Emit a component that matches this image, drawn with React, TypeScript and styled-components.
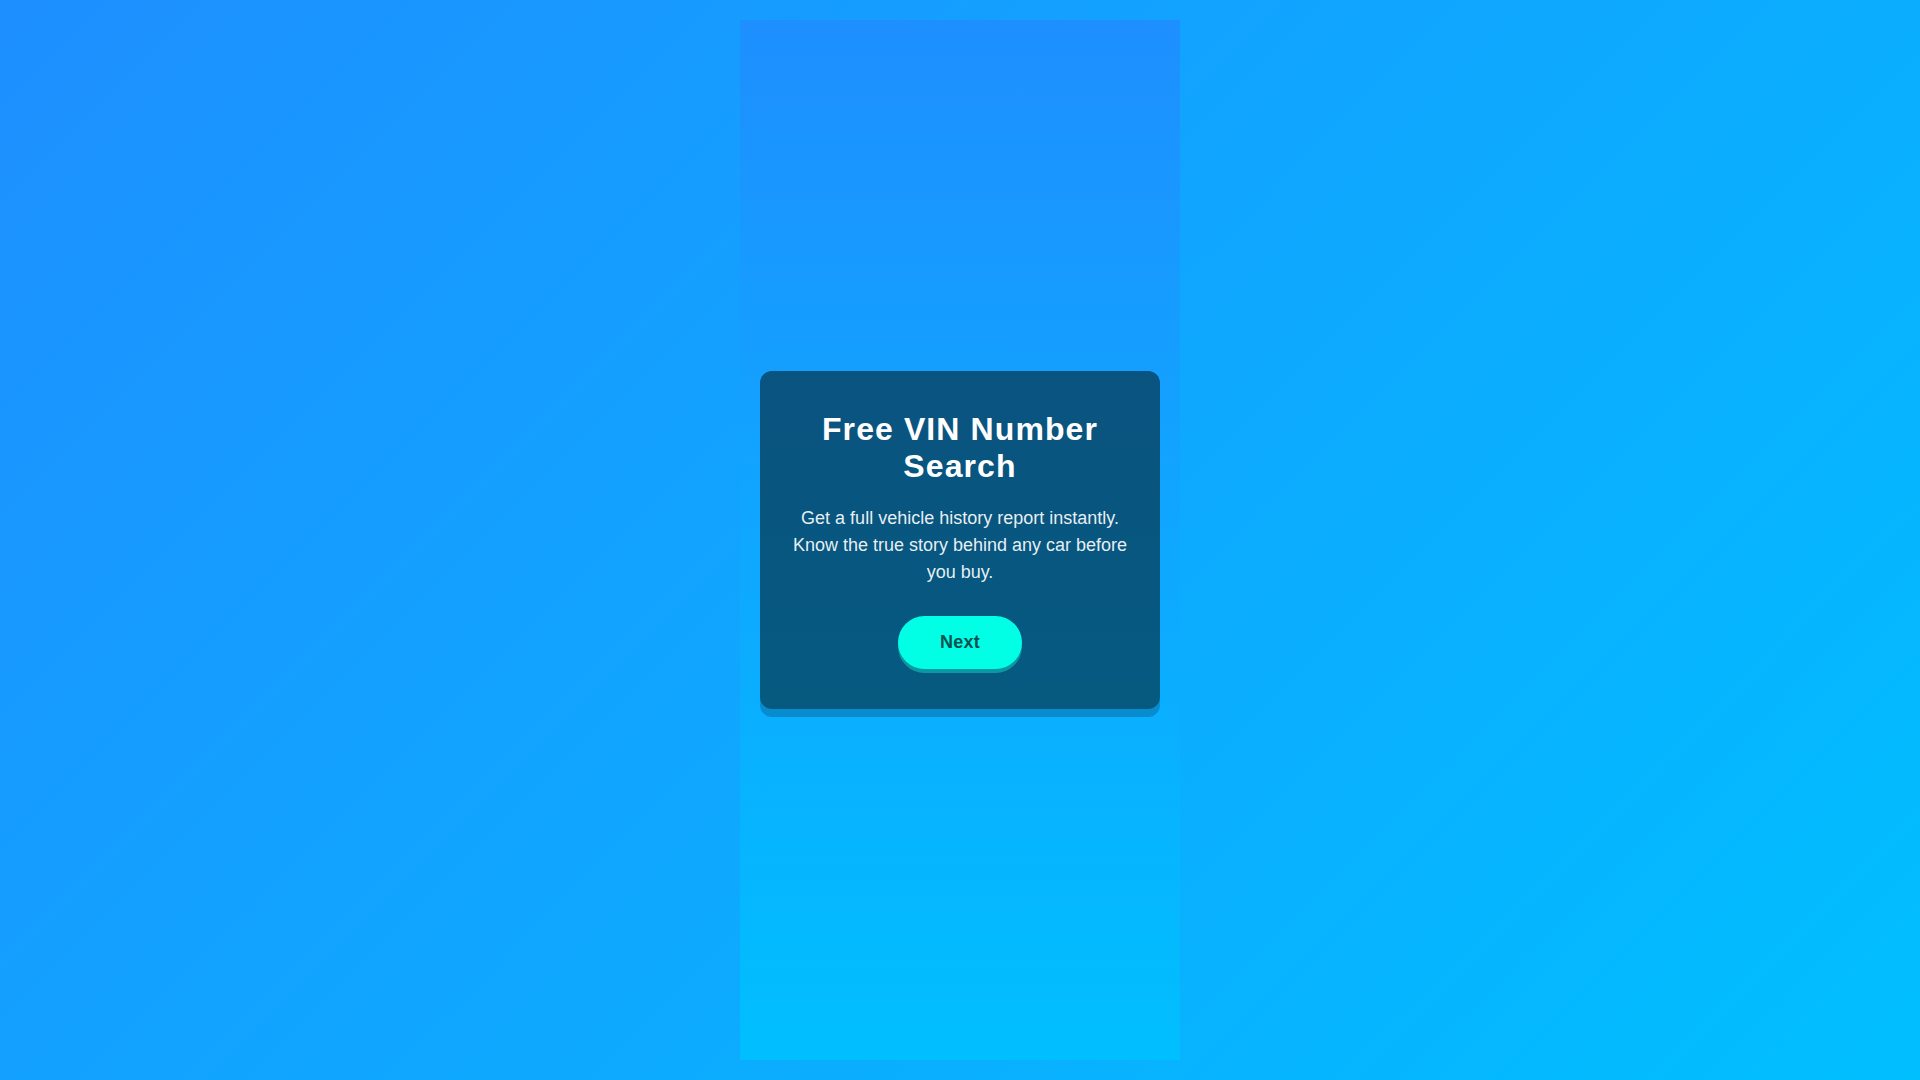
import React from "react";
import styled, { createGlobalStyle } from "styled-components";

const GlobalStyle = createGlobalStyle`
  html, body {
    margin: 0;
    padding: 0;
  }
  body {
    min-height: 100vh;
    font-family: "Liberation Sans", Arial, sans-serif;
    background: linear-gradient(135deg, #1e8fff 0%, #00bfff 100%);
    background-attachment: fixed;
  }
  * {
    box-sizing: border-box;
  }
`;

const Page = styled.div`
  display: flex;
  justify-content: center;
  padding: 20px;
  min-height: 100vh;
`;

const Column = styled.main`
  display: flex;
  align-items: center;
  justify-content: center;
  width: 100%;
  max-width: 440px;
  min-height: calc(100vh - 40px);
  padding: 0 20px;
  background: linear-gradient(180deg, #1e8fff 0%, #00bfff 100%);
`;

const Card = styled.section`
  width: 100%;
  padding: 40px 30px;
  border-radius: 12px;
  background: rgba(3, 33, 43, 0.6);
  box-shadow: 0 8px 0 rgba(10, 110, 170, 0.55);
  text-align: center;
`;

const Title = styled.h1`
  margin: 0 0 20px;
  font-size: 32px;
  font-weight: 700;
  line-height: 1.15;
  letter-spacing: 1.1px;
  color: #ffffff;
`;

const Description = styled.p`
  margin: 0 0 30px;
  font-size: 18px;
  line-height: 1.5;
  color: rgba(255, 255, 255, 0.92);
`;

const NextButton = styled.button`
  padding: 16px 42px;
  border: none;
  border-radius: 999px;
  background: #00ffe4;
  color: #064f52;
  font-family: "Liberation Sans", Arial, sans-serif;
  font-size: 18px;
  font-weight: 700;
  line-height: 1.15;
  letter-spacing: 0.3px;
  box-shadow: 0 4px 0 #0a98a2;
  cursor: pointer;
`;

export default function App() {
  return (
    <>
      <GlobalStyle />
      <Page>
        <Column>
          <Card>
            <Title>Free VIN Number Search</Title>
            <Description>
              Get a full vehicle history report instantly. Know the true story
              behind any car before you buy.
            </Description>
            <NextButton type="button">Next</NextButton>
          </Card>
        </Column>
      </Page>
    </>
  );
}
